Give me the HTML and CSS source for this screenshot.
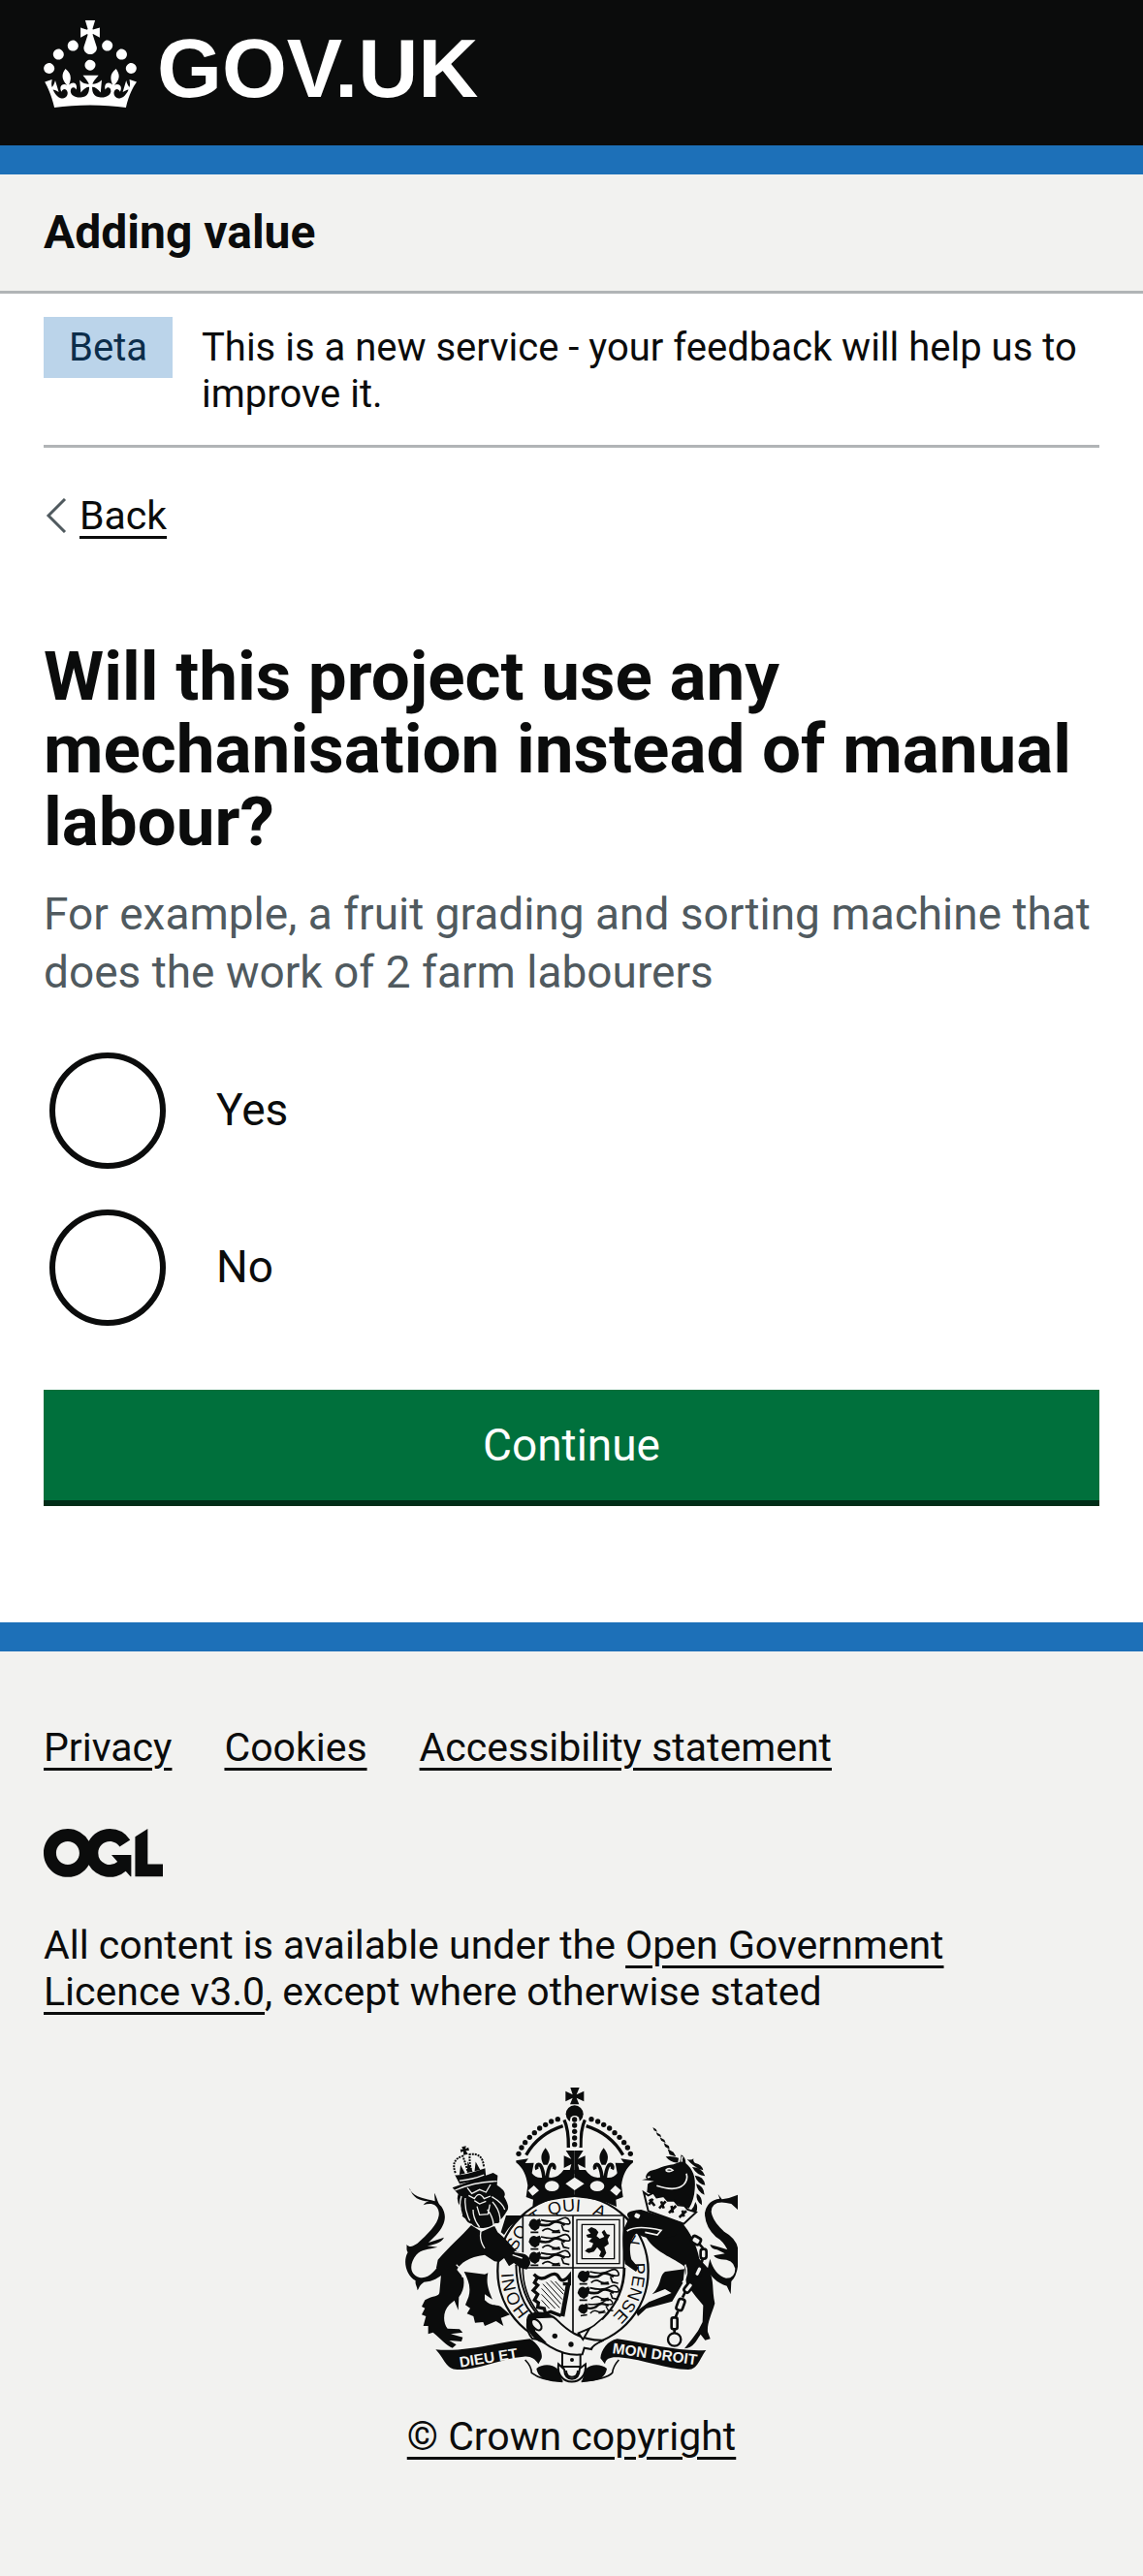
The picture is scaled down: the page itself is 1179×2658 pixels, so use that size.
FILE: index.html
```html
<!DOCTYPE html>
<html lang="en">
<head>
<meta charset="utf-8">
<meta name="viewport" content="width=device-width, initial-scale=1">
<title>Will this project use any mechanisation instead of manual labour? - Adding value - GOV.UK</title>
<link rel="stylesheet" href="styles.css">
</head>
<body>
<header class="header">
  <a class="header-logo" href="#">
    <svg class="header-crown" viewBox="0 0 32 30" aria-hidden="true"><path fill="currentColor" d="M22.6 10.4c-1 .4-2-.1-2.4-1-.4-.9.1-2 1-2.4.9-.4 2 .1 2.4 1s-.1 2-1 2.4m-5.9 6.7c-.9.4-2-.1-2.4-1-.4-.9.1-2 1-2.4.9-.4 2 .1 2.4 1s-.1 2-1 2.4m10.8-3.7c-1 .4-2-.1-2.4-1-.4-.9.1-2 1-2.4.9-.4 2 .1 2.4 1s0 2-1 2.4m3.3 4.8c-1 .4-2-.1-2.4-1-.4-.9.1-2 1-2.4.9-.4 2 .1 2.4 1s-.1 2-1 2.4M17 4.7l2.3 1.2V2.5l-2.3.7-.2-.2.9-3h-3.4l.9 3-.2.2c-.1.1-2.3-.7-2.3-.7v3.4L15 4.7c.1.1.1.2.2.2l-1.3 4c-.1.2-.1.4-.1.6 0 1.1.8 2 1.9 2.2h.7c1-.2 1.9-1.1 1.9-2.1 0-.2 0-.4-.1-.6l-1.3-4c-.1-.2 0-.2.1-.3m-7.6 5.7c.9.4 2-.1 2.4-1 .4-.9-.1-2-1-2.4-.9-.4-2 .1-2.4 1s0 2 1 2.4m-5 3c.9.4 2-.1 2.4-1 .4-.9-.1-2-1-2.4-.9-.4-2 .1-2.4 1s.1 2 1 2.4m-3.2 4.8c.9.4 2-.1 2.4-1 .4-.9-.1-2-1-2.4-.9-.4-2 .1-2.4 1s0 2 1 2.4m14.8 11c4.4 0 8.6.3 12.3.8 1.1-4.5 2.4-7 3.7-8.8l-2.5-.9c.2 1.3.3 1.9 0 2.7-.4-.4-.8-1.1-1.1-2.3l-1.2 4c.7-.5 1.3-.8 2-.9-1.1 2.5-2.6 3.1-3.5 3-1.1-.2-1.7-1.2-1.5-2.1.3-1.2 1.5-1.5 2.1-.1 1.1-2.3-.8-3-2-2.3 1.9-1.9 2.1-3.5.6-5.6-2.1 1.6-2.1 3.2-1.2 5.5-1.2-1.4-3.2-.6-2.5 1.6.9-1.4 2.1-.5 1.9.8-.2 1.1-1.7 2.1-3.5 1.9-2.7-.2-2.9-2.1-2.9-3.6.7-.1 1.9.5 2.9 1.9l.4-4.3c-1.1 1.1-2.1 1.4-3.2 1.4.4-1.2 2.1-3 2.1-3h-5.4s1.7 1.9 2.1 3c-1.1 0-2.1-.2-3.2-1.4l.4 4.3c1-1.4 2.2-2 2.9-1.9-.1 1.5-.2 3.4-2.9 3.6-1.9.2-3.4-.8-3.5-1.9-.2-1.3 1-2.2 1.9-.8.7-2.3-1.2-3-2.5-1.6.9-2.2.9-3.9-1.2-5.5-1.5 2-1.3 3.7.6 5.6-1.2-.7-3.1 0-2 2.3.6-1.4 1.8-1.1 2.1.1.2.9-.3 1.9-1.5 2.1-.9.2-2.4-.5-3.5-3 .6 0 1.2.3 2 .9l-1.2-4c-.3 1.1-.7 1.9-1.1 2.3-.3-.8-.2-1.4 0-2.7l-2.5.9C1.4 23 2.6 25.5 3.7 30c3.7-.5 7.9-.8 12.3-.8"/></svg>
    <span class="header-name">GOV.UK</span>
  </a>
</header>
<div class="service">
  <a class="service-name" href="#">Adding value</a>
</div>

<div class="container">
  <div class="phase">
    <strong class="phase-tag">Beta</strong>
    <span class="phase-text">This is a new service - your feedback will help us to improve it.</span>
  </div>
  <a class="back" href="#">
    <svg class="back-icon" viewBox="0 0 24 36" aria-hidden="true"><path d="M22 1 5 18l17 17" fill="none" stroke="#505a5f" stroke-width="3"/></svg>
    <span class="back-text">Back</span>
  </a>
  <main>
    <form class="form" action="#">
      <fieldset class="fieldset" aria-describedby="hint">
        <legend class="legend"><h1 class="heading">Will this project use any mechanisation instead of manual labour?</h1></legend>
        <div class="hint" id="hint">For example, a fruit grading and sorting machine that does the work of 2 farm labourers</div>
        <div class="radios">
          <div class="radio">
            <input class="radio-input" type="radio" name="mechanisation" id="yes" value="yes">
            <label class="radio-label" for="yes">Yes</label>
          </div>
          <div class="radio">
            <input class="radio-input" type="radio" name="mechanisation" id="no" value="no">
            <label class="radio-label" for="no">No</label>
          </div>
        </div>
      </fieldset>
      <button class="button" type="submit">Continue</button>
    </form>
  </main>
</div>

<footer class="footer">
  <ul class="footer-links">
    <li><a class="link" href="#">Privacy</a></li>
    <li><a class="link" href="#">Cookies</a></li>
    <li><a class="link" href="#">Accessibility statement</a></li>
  </ul>
  <svg class="ogl" viewBox="0 0 483 196" role="img" aria-label="Open Government Licence"><path fill="currentColor" d="M421.5 142.8V.1l-50.7 32.3v161.1h112.4v-50.7zm-122.3-9.6A47.12 47.12 0 0 1 221 97.8c0-26 21.1-47.1 47.1-47.1 16.7 0 31.4 8.7 39.7 21.8l42.7-27.2A97.63 97.63 0 0 0 268.1 0c-36.5 0-68.3 20.1-85.1 49.7A98 98 0 0 0 97.8 0C43.9 0 0 43.9 0 97.8s43.9 97.8 97.8 97.8c36.5 0 68.3-20.1 85.1-49.7a97.76 97.76 0 0 0 149.6 25.4l19.4 22.2h3v-87.8h-80l24.3 27.5zM97.8 145c-26 0-47.1-21.1-47.1-47.1s21.1-47.1 47.1-47.1 47.1 21.1 47.1 47.1S123.8 145 97.8 145"/></svg>
  <p class="licence">All content is available under the <a class="link" href="#">Open Government Licence v3.0</a>, except where otherwise stated</p>
  <a class="copyright" href="#">
    <svg class="arms" viewBox="54 42 1029 918" aria-hidden="true">
      <defs>
        <path id="ring" d="M573 795a185 185 0 1 1 1 0"/>
        <g id="passant">
          <path d="M6 8q10-12 20-4l10-4 4 8-6 22-12 8-12-6-8-12z"/>
          <path d="M30 16q30 10 44-2t40 6" fill="none" stroke="#0b0c0c" stroke-width="8"/>
          <path d="M40 4q40 10 60-2t28 4-20 8M8 42h24M44 38q14-12 26-4t28 2M104 20l6 16 18 4M74 42h26" fill="none" stroke="#0b0c0c" stroke-width="5"/>
        </g>
        <g id="lis">
          <path d="M0-42c16 20 16 34 6 52h-12c-10-18-10-32 6-52z"/>
          <path d="M-5 50C-8 20-16 5-24 10q-6 6-2 14M5 50C8 20 16 5 24 10q6 6 2 14" fill="none" stroke="#0b0c0c" stroke-width="11"/>
        </g>
        <g id="crownside">
          <g><circle cx="105" cy="232" r="8"/><circle cx="114" cy="213" r="8"/><circle cx="125" cy="197" r="8"/><circle cx="139" cy="181" r="8"/><circle cx="154" cy="167" r="8"/><circle cx="170" cy="153" r="8"/><circle cx="188" cy="142" r="8"/><circle cx="206" cy="132" r="8"/><circle cx="226" cy="125" r="8"/></g>
          <path d="M128 236q38-66 114-90M246 127q14 30 13 86" fill="none" stroke="#0b0c0c" stroke-width="10"/>
          <path d="M97 253l38-6-10 14 27-1-6 32q10 16 32 14l12-2 16 2q24-2 38-24l34 0 0 84q-84 6-130 30l2-22-22-8 5-36c-4-30-14-54-36-71z"/>
          <use href="#lis" x="188" y="256"/>
          <path d="M278 222h-27l17 26-23-10v38l23-12-8 30h18z"/>
        </g>
      </defs>
      <g fill="#0b0c0c">
        <!-- garter -->
        <circle cx="573" cy="610" r="233" fill="#f2f2f0" stroke="#0b0c0c" stroke-width="7"/>
        <path d="M397 590q2 110 62 165M407 588q4 100 60 160M733 600q0 90-70 160" fill="none" stroke="#0b0c0c" stroke-width="6"/>
        <g class="arms-motto">
          <text><textPath href="#ring" startOffset="150">HONI</textPath></text>
          <text><textPath href="#ring" startOffset="350">SO</textPath></text>
          <text><textPath href="#ring" startOffset="452">T</textPath></text>
          <text><textPath href="#ring" startOffset="506">QUI</textPath></text>
          <text><textPath href="#ring" startOffset="640">A</textPath></text>
          <text><textPath href="#ring" startOffset="768">Y</textPath></text>
          <text><textPath href="#ring" startOffset="846">PENSE</textPath></text>
        </g>
        <!-- royal crown -->
        <path d="M565 42h28l-9 22 23-11v32l-23-11 8 20h-28l8-20-22 11V53l22 11z"/>
        <circle cx="578" cy="124" r="27"/>
        <g transform="translate(300 15)">
          <use href="#crownside"/>
          <use href="#crownside" transform="matrix(-1 0 0 1 556 0)"/>
          <rect x="264" y="114" width="29" height="106" rx="14" fill="#f2f2f0"/>
          <circle cx="278" cy="126" r="8"/><circle cx="278" cy="144" r="8"/><circle cx="278" cy="163" r="8"/><circle cx="278" cy="183" r="8"/><circle cx="278" cy="203" r="8"/>
          <g fill="#f2f2f0"><path d="M250 325l28-20 30 20-30 20zM134 346l18-16 16 16-20 16zM422 346l-18-16-16 16 20 16z"/><ellipse cx="208" cy="332" rx="22" ry="16"/><ellipse cx="348" cy="332" rx="22" ry="16"/></g>
        </g>
        <!-- shield -->
        <g transform="translate(300 420)">
          <path d="M118 18h312v162c0 100-60 175-157 215C190 365 118 290 118 180z" fill="#f2f2f0" stroke="#0b0c0c" stroke-width="5"/>
          <path d="M118 180h312M273 18v377" stroke="#0b0c0c" stroke-width="5"/>
          <use href="#passant" x="134" y="28"/><use href="#passant" x="134" y="80"/><use href="#passant" x="134" y="130"/>
          <use href="#passant" x="285" y="188"/><use href="#passant" x="285" y="238"/><use href="#passant" transform="translate(285 294) rotate(-8) scale(.85)"/>
          <g fill="none" stroke="#0b0c0c" stroke-width="4"><path d="M285 31h132v136H285zM301 46h100v106H301z"/></g>
          <path d="M318 62l12-8 14 6 8 10-6 12 10 8 14-6-8-14 8-8 8 14 10 2-8 14 4 14-14 10 6 18-10 16-12-6 6-14-12-14-10 14-16 4-12-6 8-8 12-2 6-14-14-6 10-10-14-2-4-8 14-4z"/>
          <path d="M152 200q20 22 44 6t34 4 32-6v26h-20" fill="none" stroke="#0b0c0c" stroke-width="10"/>
          <path d="M164 208l-10 18 10 8-14 16 14 12-10 18 12 8-2 14 20 4 4 16 16-6 32 12" fill="none" stroke="#0b0c0c" stroke-width="10"/>
          <path d="M258 232l-18 98" stroke="#0b0c0c" stroke-width="14"/>
          <path d="M180 230l56 62M176 244l56 60M176 262l42 44M190 224l50 54M204 220l40 42M218 222l28 30M176 280l24 26" stroke="#0b0c0c" stroke-width="3"/>
        </g>
        <!-- belt and pendant -->
        <g transform="translate(300 420)" stroke="#0b0c0c" stroke-width="6">
          <path d="M240 420h56v66h-56z" fill="#f2f2f0"/>
          <path d="M148 400c-26-30-20-76 8-76q36-10 66 16c30 30 70 66 146 64q-36 16-38 28l-22-4-6 20q-50 6-100-24-40-28-54-24z" fill="#f2f2f0"/>
          <path d="M290 382l34-14-20 34z" fill="#f2f2f0"/>
          <path d="M138 326q40-16 68 6l-48 2q-12 16-4 44l30 30-14-2c-36-20-46-60-32-80z"/>
          <ellipse cx="160" cy="356" rx="12" ry="20" fill="#f2f2f0" transform="rotate(-40 160 356)"/>
          <path d="M228 478c-10 70 90 76 84 0l-18 14q-2 32-24 32t-24-30z" fill="#f2f2f0"/>
          <path d="M252 498q0 20 18 20t18-20" fill="none"/>
        </g>
        <circle cx="517" cy="811" r="8"/><circle cx="567" cy="837" r="8"/><circle cx="570" cy="885" r="6"/>
        <!-- ribbon -->
        <path d="M148 853c92 9 192-23 292-33 25 15 40 40 36 60l-10 18c-11-18-26-26-46-23-70 5-130 40-205 40-35 0-40-35-67-62z"/>
        <path d="M985 855c-85 5-175-20-275-35-30 5-50 35-52 60l14 18c3-18 18-23 43-21 85 8 145 38 215 38 30 0 35-35 55-60z"/>
        <path d="M460 912c18-16 50-14 64 0l18 40c-44 0-76-6-82-40zM678 912c-18-16-50-14-64 0l-14 40c44 0 72-6 78-40z"/>
        <path d="M425 885q20 20 20 40 30 24 96 27M715 885q-18 20-20 40-20 20-96 27" fill="none" stroke="#0b0c0c" stroke-width="5"/>
        <g class="arms-ribbon">
          <text transform="translate(224 908) rotate(-9)">DIEU ET</text>
          <text transform="translate(694 864) rotate(8)">MON DROIT</text>
        </g>
        <!-- lion -->
        <path d="M68 358c16 26 50 28 78 36l-2-26c10 16 8 30 22 42 20 30 10 60-16 88l-24 24 48-16c-10 20-36 22-52 26l32 4c-30 8-50 6-66 24-20 24-24 60 10 70 30 6 50-24 68-48l12 34c-24 14-36 28-66 28-14 10-14 16-20 26-2-14-8-18-6-30-30-18-40-60-24-88-6-8-2-16-4-24 12 12 20 4 34-4 34-30 70-66 66-96-4-28-28-30-48-22 6-8 10-10 18-12-30 0-52-12-60-40z"/>
        <path d="M258 468c-28 32-68 67-103 107l-5 25 16 10-6 65c0 15-20 10-45 25l-10 20 10 5-10 20 13 5-8 30h15v25l15-5c25 20 40 40 60 48l12-10-22-13 38 3 4-13-37-10 37-5-10-10-37-2c-15-18-15-53 5-73l16-14 12 30 2-40c14-18 18-40 14-60l-20-25c10-20 36-40 86-46l30 20 15 2 15-12 15 25 15-10 20 15 20 5 10-15c5-20-10-35-40-40-20-20-40-45-60-60l-10-20-40 18z"/>
        <path d="M350 490l16-52 60 0c-28 14-50 32-66 60z"/>
        <path d="M236 612l64 8 10-4c-6 30 0 50 14 82l-24-16v18c20 20 30 12 50 20l28 25-28 10 8 25-23-15-35 15-5-12-25 2-5-20-20-8 10-17-15-10 10-25c8-30 0-50-14-78z"/>
        <path d="M200 352l126-46 14 8-2 30q32 20 22 36 18 30 10 42-18 30-24 30 2 12-14 10-20 18-46 14-20-2-26-12-14-2-20-16-18-10-14-34-16-22-8-42z"/>
        <g fill="none" stroke="#f2f2f0" stroke-width="4">
          <path d="M208 360q60-26 130-28M246 352l14 18 24-12 20 8 14-24M250 376l18 10q14-26 30 0l20-8M268 392l16 10 20-8M240 384q-4 36 14 70M228 378q-10 30 2 60M322 380q34 20 40 40M324 396q24 26 24 60M308 420q18 20 20 52M276 410l8 26 26-2 6-30M264 420q0 30 20 54"/>
          <path d="M290 480q-10 30 10 60M212 590q18 14 20 40M386 560l30 10M392 550l36 6"/>
        </g>
        <g transform="rotate(-13 255 300)">
          <path d="M206 302q24 8 96 0l-4 30h-84z"/>
          <path d="M209 296q-6-44 34-46 4 30 4 48M299 296q6-44-34-46-8 30-6 48" fill="none" stroke="#0b0c0c" stroke-width="6" stroke-dasharray="6 3"/>
          <path d="M246 222h14l-4 8 10-2v10l-10-2 4 12h-14l2-12-8 2v-10l8 2z"/>
          <path d="M230 276l8 28h-18zM278 276l8 28h-18zM254 270l8 34h-18z"/>
          <path d="M216 322q40 6 78 0" fill="none" stroke="#f2f2f0" stroke-width="4"/>
        </g>
        <!-- unicorn -->
        <g transform="translate(570 0)">
          <path d="M250 165l10 6 4 8-10-4zM260 180l14 8 2 8-12-6zM272 196l14 8 4 10-14-8zM284 213l16 10 2 10-14-8zM296 232l18 10 8 14-20-6zM290 256q20-4 40 4l-2 14q-22 2-38-18z"/>
          <path d="M228 320q2-14 14-20c22-4 44-18 72-20l20-8 4-22q14 8 14 26c22 18 32 44 28 80q-2 34-18 60l-130-50 2-22q-2-8 20-12l-12-2-26-2 16-4z"/>
          <path d="M356 264q14 4 20-2-2 10 6 14 20 4 24 22-26-6-50-34zM372 288q32 2 40 28-26-2-40-28zM380 314q28 2 32 30-24-4-32-30zM384 340q24 6 26 34-22-8-26-34zM386 370q18 10 16 36-20-12-16-36zM382 396q10 16 2 34-10-2-16-8 10-10 14-26z"/>
          <path d="M262 346q60 20 84-4 14-16 8-34M290 298q10-10 22 0-12 8-22 0M234 320l8-2M340 272q-2-10 2-16" fill="none" stroke="#f2f2f0" stroke-width="5"/>
          <path d="M222 366l14 10 16-8 10 14 22-4 12 14 20 0 12 14 20 2 10 12 26 8-38 36-110-40z" fill="#f2f2f0" stroke="#0b0c0c" stroke-width="6"/>
          <path d="M240 388l16 20M250 386l-12 18M276 394l8 22M290 394l-20 22M308 408l4 22M322 408l-22 22M342 422l4 20M354 424l-22 20" stroke="#0b0c0c" stroke-width="8"/>
          <path d="M340 460c26 30 46 70 54 112l28 30c20 40 10 62 20 108-12 40-24 60-22 88l8 22-16 4-14-18c-14 20-22 42-50 44l24-30q20-24 32-52l2-52-22-26-30-40-6-54c-30-26-100-46-122-98l-28-4c-20 20-22 50-14 80l22 26-8 12-34-24c-6-40-10-80-4-108l16-34q-20-22 38-26z"/>
          <path d="M242 432l98 28-20 40q-70 20-112-2z"/>
          <path d="M248 682c32-30 20-56 40-70l60-8-4 42-34 58-80 22-26 24-6-14 40-30 70-28-20-12z"/>
          <path d="M170 486q30-20 106-2l-12 14-38-8M350 590q14 30-8 56" fill="none" stroke="#f2f2f0" stroke-width="5"/>
          <path d="M452 372l12 16q26-4 49-14v46l-20-18q-60-16-62 24 4 30 40 62 36 20 42 50v58q-4 30-20 46l-2 40-12-26c-30-8-50-30-60-50l8-34q14 50 50 60 28 0 28-30-6-28-44-28-20-4-22-12l34-6-24-12q-18-2-22-16l30 8 24 8q-12-26-36-40-34-32-34-74 8-40 46-44z"/>
          <g fill="#f2f2f0" stroke="#0b0c0c" stroke-width="8">
            <rect x="190" y="428" width="24" height="22" rx="8" transform="rotate(25 202 439)"/>
            <rect x="370" y="504" width="28" height="22" rx="8" transform="rotate(30 384 515)"/>
            <rect x="398" y="542" width="18" height="30" rx="8"/><rect x="382" y="594" width="18" height="34" rx="8" transform="rotate(25 391 611)"/>
            <rect x="352" y="644" width="18" height="34" rx="8" transform="rotate(38 361 661)"/><rect x="326" y="696" width="20" height="36" rx="8" transform="rotate(20 336 714)"/>
            <rect x="308" y="754" width="18" height="36" rx="6"/>
          </g>
          <path d="M394 526l12 14M404 574l-6 20M380 628l-8 16M350 676l-8 16M328 734l-8 20M317 790v14" stroke="#0b0c0c" stroke-width="8"/>
          <circle cx="317" cy="822" r="20" fill="none" stroke="#0b0c0c" stroke-width="7"/>
        </g>
      </g>
    </svg>
    <span class="copyright-text">© Crown copyright</span>
  </a>
</footer>
</body>
</html>
```
FILE: styles.css
```css
*, *::before, *::after { box-sizing: border-box; }
body {
  margin: 0;
  background: #fff;
  color: #0b0c0c;
  font-family: Roboto, "Liberation Sans", sans-serif;
  font-size: 40px;
  line-height: 48px;
}
.header {
  padding: 21px 45px 30px;
  background: #0b0c0c;
  border-bottom: 30px solid #1d70b8;
}
.header-logo {
  display: flex;
  align-items: flex-start;
  gap: 21px;
  color: #fff;
  text-decoration: none;
}
.header-crown { width: 96px; height: 90px; }
.header-name {
  font-family: "Liberation Sans", sans-serif;
  font-size: 86px;
  font-weight: 700;
  line-height: 99px;
}
.service {
  padding: 30px 45px;
  background: #f2f2f0;
  border-bottom: 3px solid #b1b4b6;
}
.service-name {
  display: block;
  color: inherit;
  font-size: 48px;
  font-weight: 700;
  line-height: 60px;
  text-decoration: none;
}
.container { padding: 0 45px; }
.phase {
  display: flex;
  align-items: flex-start;
  gap: 30px;
  padding: 24px 0 28px;
  border-bottom: 3px solid #b1b4b6;
}
.phase-text { padding-top: 8px; }
.phase-tag {
  padding: 8px 26px 7px;
  background: #bbd4ea;
  color: #0c2d4a;
  font-weight: 400;
}
.back {
  display: inline-flex;
  align-items: center;
  gap: 13px;
  margin-top: 46px;
  color: inherit;
  font-size: 41px;
  text-decoration: none;
}
.back-icon { width: 24px; height: 36px; }
.back-text, .link, .copyright-text {
  text-decoration: underline;
  text-decoration-thickness: 3px;
  text-underline-offset: 7px;
}
.link { color: inherit; }
.form { padding: 99px 0 120px; }
.fieldset { margin: 0; padding: 0; border: 0; min-width: 0; }
.legend { padding: 0; }
.heading {
  margin: 0;
  font-size: 71px;
  font-weight: 700;
  line-height: 75px;
}
.hint {
  margin: 28px 0 47px;
  color: #505a5f;
  font-size: 46px;
  line-height: 60px;
}
.radios { display: grid; gap: 30px; }
.radio {
  display: flex;
  align-items: center;
  gap: 52px;
  padding: 6px;
  font-size: 46px;
  line-height: 60px;
}
.radio-input {
  appearance: none;
  flex: none;
  width: 120px;
  height: 120px;
  margin: 0;
  border: 6px solid #0b0c0c;
  border-radius: 50%;
}
.radio-input:checked {
  background: #0b0c0c content-box;
  padding: 24px;
}
.radio-label { padding-bottom: 3px; }
.button {
  display: block;
  width: 100%;
  margin-top: 60px;
  padding: 27px 30px;
  background: #00703c;
  border: 0;
  border-bottom: 6px solid #002d18;
  color: #fff;
  font-family: inherit;
  font-size: 46px;
  line-height: 60px;
}
.footer {
  display: flex;
  flex-direction: column;
  align-items: flex-start;
  padding: 75px 45px 120px;
  background: #f2f2f0;
  border-top: 30px solid #1d70b8;
  font-size: 41px;
}
.footer-links {
  display: flex;
  flex-wrap: wrap;
  gap: 15px 54px;
  margin: 0;
  padding: 0;
  list-style: none;
}
.ogl { width: 123px; height: 50px; margin: 60px 0 46px; }
.licence { max-width: 1000px; margin: 0 0 75px; }
.copyright {
  display: flex;
  flex-direction: column;
  align-items: center;
  align-self: center;
  gap: 30px;
  color: inherit;
  text-decoration: none;
}
.arms { width: 343px; height: 306px; }
.arms-motto {
  font-family: "Liberation Sans", sans-serif;
  font-size: 54px;
}
.arms-ribbon {
  fill: #f2f2f0;
  font-family: "Liberation Sans", sans-serif;
  font-size: 46px;
  font-weight: 700;
}
```
